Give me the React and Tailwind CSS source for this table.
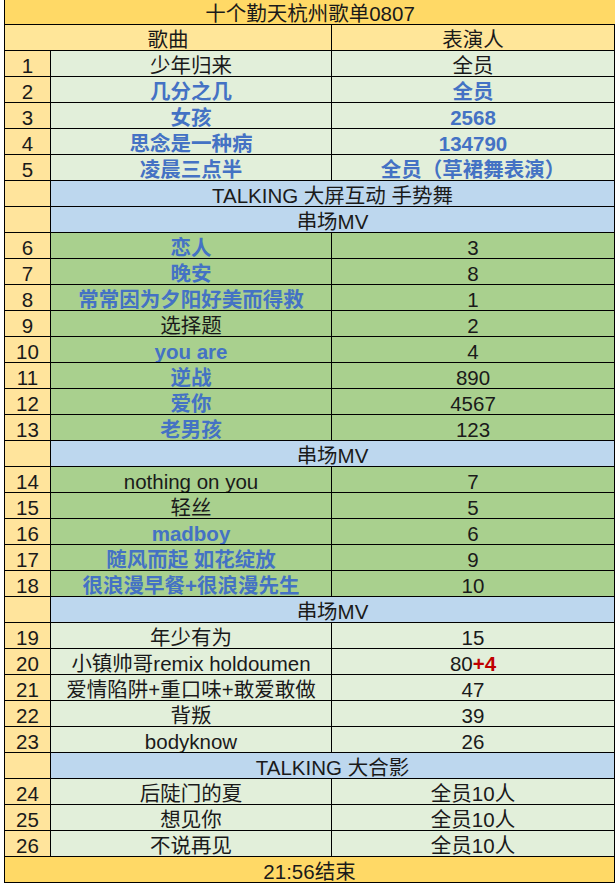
const BLUE = 'text-[#4472c4] font-bold';
const CELL = 'flex items-center justify-center whitespace-nowrap pt-[4px] overflow-hidden';

const rows = [
  { type: 'song', n: 1, s: '少年归来', p: '全员', bg: 'light' },
  { type: 'song', n: 2, s: '几分之几', p: '全员', bg: 'light', bs: true, bp: true },
  { type: 'song', n: 3, s: '女孩', p: '2568', bg: 'light', bs: true, bp: true },
  { type: 'song', n: 4, s: '思念是一种病', p: '134790', bg: 'light', bs: true, bp: true },
  { type: 'song', n: 5, s: '凌晨三点半', p: '全员（草裙舞表演）', bg: 'light', bs: true, bp: true },
  { type: 'section', t: 'TALKING 大屏互动 手势舞' },
  { type: 'section', t: '串场MV' },
  { type: 'song', n: 6, s: '恋人', p: '3', bg: 'green', bs: true },
  { type: 'song', n: 7, s: '晚安', p: '8', bg: 'green', bs: true },
  { type: 'song', n: 8, s: '常常因为夕阳好美而得救', p: '1', bg: 'green', bs: true },
  { type: 'song', n: 9, s: '选择题', p: '2', bg: 'green' },
  { type: 'song', n: 10, s: 'you are', p: '4', bg: 'green', bs: true },
  { type: 'song', n: 11, s: '逆战', p: '890', bg: 'green', bs: true },
  { type: 'song', n: 12, s: '爱你', p: '4567', bg: 'green', bs: true },
  { type: 'song', n: 13, s: '老男孩', p: '123', bg: 'green', bs: true },
  { type: 'section', t: '串场MV' },
  { type: 'song', n: 14, s: 'nothing on you', p: '7', bg: 'green' },
  { type: 'song', n: 15, s: '轻丝', p: '5', bg: 'green' },
  { type: 'song', n: 16, s: 'madboy', p: '6', bg: 'green', bs: true },
  { type: 'song', n: 17, s: '随风而起 如花绽放', p: '9', bg: 'green', bs: true },
  { type: 'song', n: 18, s: '很浪漫早餐+很浪漫先生', p: '10', bg: 'green', bs: true },
  { type: 'section', t: '串场MV' },
  { type: 'song', n: 19, s: '年少有为', p: '15', bg: 'light' },
  { type: 'song', n: 20, s: '小镇帅哥remix holdoumen', p: 'plus', bg: 'light' },
  { type: 'song', n: 21, s: '爱情陷阱+重口味+敢爱敢做', p: '47', bg: 'light' },
  { type: 'song', n: 22, s: '背叛', p: '39', bg: 'light' },
  { type: 'song', n: 23, s: 'bodyknow', p: '26', bg: 'light' },
  { type: 'section', t: 'TALKING 大合影' },
  { type: 'song', n: 24, s: '后陡门的夏', p: '全员10人', bg: 'light' },
  { type: 'song', n: 25, s: '想见你', p: '全员10人', bg: 'light' },
  { type: 'song', n: 26, s: '不说再见', p: '全员10人', bg: 'light' },
];

function Row({ r }) {
  if (r.type === 'section') {
    return (
      <div className="grid grid-cols-[46px_1fr] h-[26px] border-b border-r border-black">
        <div className="bg-[#ffe49c] border-r border-black" />
        <div className={`bg-[#bdd7ee] ${CELL}`}>{r.t}</div>
      </div>
    );
  }
  const bg = r.bg === 'green' ? 'bg-[#a9d08e]' : 'bg-[#e2efda]';
  return (
    <div className={`grid grid-cols-[46px_281px_1fr] h-[26px] border-b border-r border-black ${bg}`}>
      <div className={`bg-[#ffe49c] border-r border-black ${CELL}`}>{r.n}</div>
      <div className={`border-r border-black ${CELL} ${r.bs ? BLUE : ''}`}>{r.s}</div>
      <div className={`${CELL} ${r.bp ? BLUE : ''}`}>
        {r.p === 'plus' ? (
          <span>80<span className="text-[#c00000] font-bold">+4</span></span>
        ) : r.p}
      </div>
    </div>
  );
}

export default function App() {
  return (
    <div className="w-[616px] h-[890px] bg-white pl-[4px] text-[20.5px] leading-[20px] text-[#1a1a1a]" style={{ fontFamily: '"Liberation Sans", "Noto Sans CJK SC", sans-serif' }}>
      <div className="w-[611px] border-l border-black">
        <div className={`h-[25px] bg-[#ffd966] border-b border-black ${CELL}`}>
          十个勤天杭州歌单0807
        </div>
        <div className="grid grid-cols-[327px_1fr] h-[26px] border-b border-r border-black bg-[#ffe699]">
          <div className={`border-r border-black ${CELL}`}>歌曲</div>
          <div className={CELL}>表演人</div>
        </div>
        {rows.map((r, i) => <Row key={i} r={r} />)}
        <div className={`h-[26px] bg-[#ffd966] border-b border-r border-black ${CELL}`}>
          21:56结束
        </div>
      </div>
    </div>
  );
}
